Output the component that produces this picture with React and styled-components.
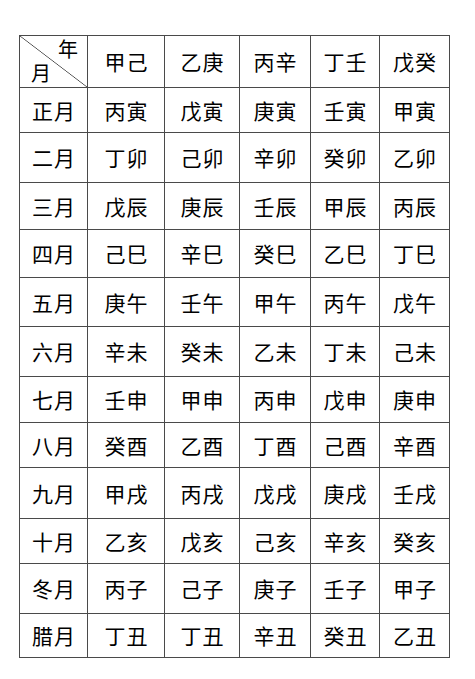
import * as React from 'react';
import styled, { createGlobalStyle } from 'styled-components';

const GlobalStyle = createGlobalStyle`
  html, body {
    margin: 0;
    padding: 0;
    background: #fff;
  }
  body {
    font-family: "Noto Sans CJK SC", "Noto Sans", sans-serif;
    color: #000;
  }
`;

const Page = styled.div`
  padding: 35px 0 0 19px;
  width: 475px;
  height: 679px;
  box-sizing: border-box;
`;

const Table = styled.div`
  display: inline-grid;
  grid-template-columns: 67px 76px 74px 70px 68px 69px;
  grid-template-rows: ${(p) => p.rows.map((h) => `${h}px`).join(' ')};
  gap: 1px;
  padding: 1px;
  background: #4a4a4a;
`;

const Cell = styled.div`
  background: #fff;
  display: flex;
  align-items: center;
  justify-content: center;
  font-size: 21px;
  line-height: 1;
  letter-spacing: 1px;
  padding-left: 1px;
`;

const CornerCell = styled.div`
  background:
    linear-gradient(
      to top right,
      #fff calc(50% - 0.7px),
      #4a4a4a 50%,
      #fff calc(50% + 0.7px)
    );
  background-color: #fff;
  font-size: 20px;
  line-height: 1;
  display: flex;
  flex-direction: column;
  justify-content: space-between;
  padding: 3px 9px 4px 11px;
  box-sizing: border-box;
`;

const CornerTop = styled.span`
  align-self: flex-end;
`;

const CornerBottom = styled.span`
  align-self: flex-start;
`;

const rowHeights = [51, 44, 49, 46, 47, 48, 49, 45, 44, 50, 44, 49, 43];

const years = ['甲己', '乙庚', '丙辛', '丁壬', '戊癸'];

const rows = [
  ['正月', '丙寅', '戊寅', '庚寅', '壬寅', '甲寅'],
  ['二月', '丁卯', '己卯', '辛卯', '癸卯', '乙卯'],
  ['三月', '戊辰', '庚辰', '壬辰', '甲辰', '丙辰'],
  ['四月', '己巳', '辛巳', '癸巳', '乙巳', '丁巳'],
  ['五月', '庚午', '壬午', '甲午', '丙午', '戊午'],
  ['六月', '辛未', '癸未', '乙未', '丁未', '己未'],
  ['七月', '壬申', '甲申', '丙申', '戊申', '庚申'],
  ['八月', '癸酉', '乙酉', '丁酉', '己酉', '辛酉'],
  ['九月', '甲戌', '丙戌', '戊戌', '庚戌', '壬戌'],
  ['十月', '乙亥', '戊亥', '己亥', '辛亥', '癸亥'],
  ['冬月', '丙子', '己子', '庚子', '壬子', '甲子'],
  ['腊月', '丁丑', '丁丑', '辛丑', '癸丑', '乙丑'],
];

export default function App() {
  return (
    <Page>
      <GlobalStyle />
      <Table rows={rowHeights}>
        <CornerCell>
          <CornerTop>年</CornerTop>
          <CornerBottom>月</CornerBottom>
        </CornerCell>
        {years.map((y) => (
          <Cell key={y}>{y}</Cell>
        ))}
        {rows.map((r) =>
          r.map((c, i) => <Cell key={r[0] + i}>{c}</Cell>)
        )}
      </Table>
    </Page>
  );
}
